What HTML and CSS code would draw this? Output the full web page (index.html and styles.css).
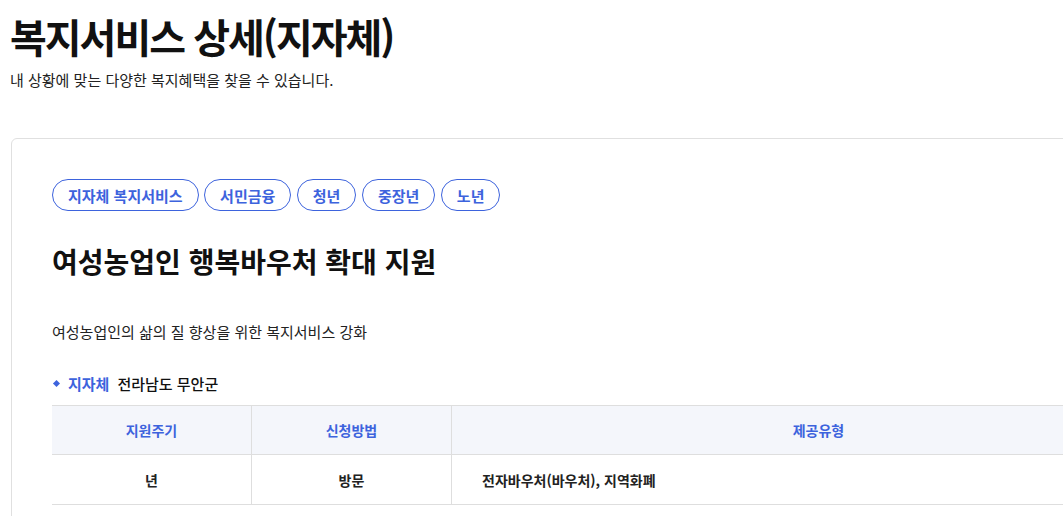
FILE: index.html
```html
<!DOCTYPE html>
<html lang="ko">
<head>
<meta charset="utf-8">
<title>복지서비스 상세(지자체)</title>
<link rel="stylesheet" href="styles.css">
</head>
<body>
<div class="page">
  <h1 class="page-title">복지서비스 상세(지자체)</h1>
  <p class="page-sub">내 상황에 맞는 다양한 복지혜택을 찾을 수 있습니다.</p>

  <section class="card">
    <ul class="tags">
      <li class="tag">지자체 복지서비스</li>
      <li class="tag">서민금융</li>
      <li class="tag">청년</li>
      <li class="tag">중장년</li>
      <li class="tag">노년</li>
    </ul>
    <h2 class="svc-title">여성농업인 행복바우처 확대 지원</h2>
    <p class="svc-desc">여성농업인의 삶의 질 향상을 위한 복지서비스 강화</p>
    <div class="meta">
      <span class="meta-bullet"></span>
      <span class="meta-label">지자체</span>
      <span class="meta-value">전라남도 무안군</span>
    </div>
    <table class="info">
      <thead>
        <tr>
          <th class="c1">지원주기</th>
          <th class="c2">신청방법</th>
          <th class="c3">제공유형</th>
        </tr>
      </thead>
      <tbody>
        <tr>
          <td class="c1">년</td>
          <td class="c2">방문</td>
          <td class="c3 left">전자바우처(바우처), 지역화폐</td>
        </tr>
      </tbody>
    </table>
  </section>
</div>
</body>
</html>
```

FILE: styles.css
```css
html, body {
  margin: 0;
  padding: 0;
  background: #fff;
  overflow: hidden;
}
body {
  font-family: "Noto Sans CJK KR", "Noto Sans", sans-serif;
  color: #111;
}
.page {
  width: 1216px;
  padding: 10px 0 0 10px;
}
.page-title {
  margin: 0;
  font-size: 40px;
  line-height: 52px;
  font-weight: 700;
  letter-spacing: -2px;
  color: #111;
}
.page-sub {
  margin: 7px 0 0;
  font-size: 15px;
  line-height: 22px;
  color: #222;
}
.card {
  margin-top: 47px;
  margin-left: 1px;
  border: 1px solid #e0e0e0;
  border-radius: 6px;
  padding: 40px 40px 40px;
}
.tags {
  list-style: none;
  margin: 0;
  padding: 0;
  display: flex;
  gap: 5.5px;
}
.tag {
  height: 32px;
  box-sizing: border-box;
  border: 1px solid #3d63dd;
  border-radius: 16px;
  padding: 0 15px;
  display: flex;
  align-items: center;
  font-size: 15px;
  font-weight: 600;
  color: #3d63dd;
}
.svc-title {
  margin: 32px 0 0;
  font-size: 28px;
  line-height: 36px;
  font-weight: 700;
  color: #111;
}
.svc-desc {
  margin: 42px 0 0;
  font-size: 15px;
  line-height: 22px;
  color: #222;
}
.meta {
  margin-top: 29px;
  display: flex;
  align-items: center;
  height: 22px;
  font-size: 15px;
}
.meta-bullet {
  width: 5px;
  height: 5px;
  background: #3d63dd;
  transform: rotate(45deg);
  margin: 0 9px 0 2px;
}
.meta-label {
  color: #3d63dd;
  font-weight: 700;
  margin-right: 8px;
}
.meta-value {
  color: #111;
  font-weight: 500;
}
.info {
  margin-top: 11px;
  width: 100%;
  border-collapse: collapse;
  font-size: 14px;
}
.info th, .info td {
  border-top: 1px solid #dedede;
  border-bottom: 1px solid #dedede;
  border-left: 1px solid #dedede;
  text-align: center;
}
.info th:first-child, .info td:first-child {
  border-left: none;
}
.info th {
  height: 48px;
  padding: 0;
  background: #f4f6fb;
  color: #3d63dd;
  font-weight: 600;
}
.info td {
  height: 49px;
  padding: 0;
  color: #222;
  font-weight: 600;
}
.info .c1, .info .c2 {
  width: 199px;
}
.info td.left {
  text-align: left;
  padding-left: 30px;
}
```
